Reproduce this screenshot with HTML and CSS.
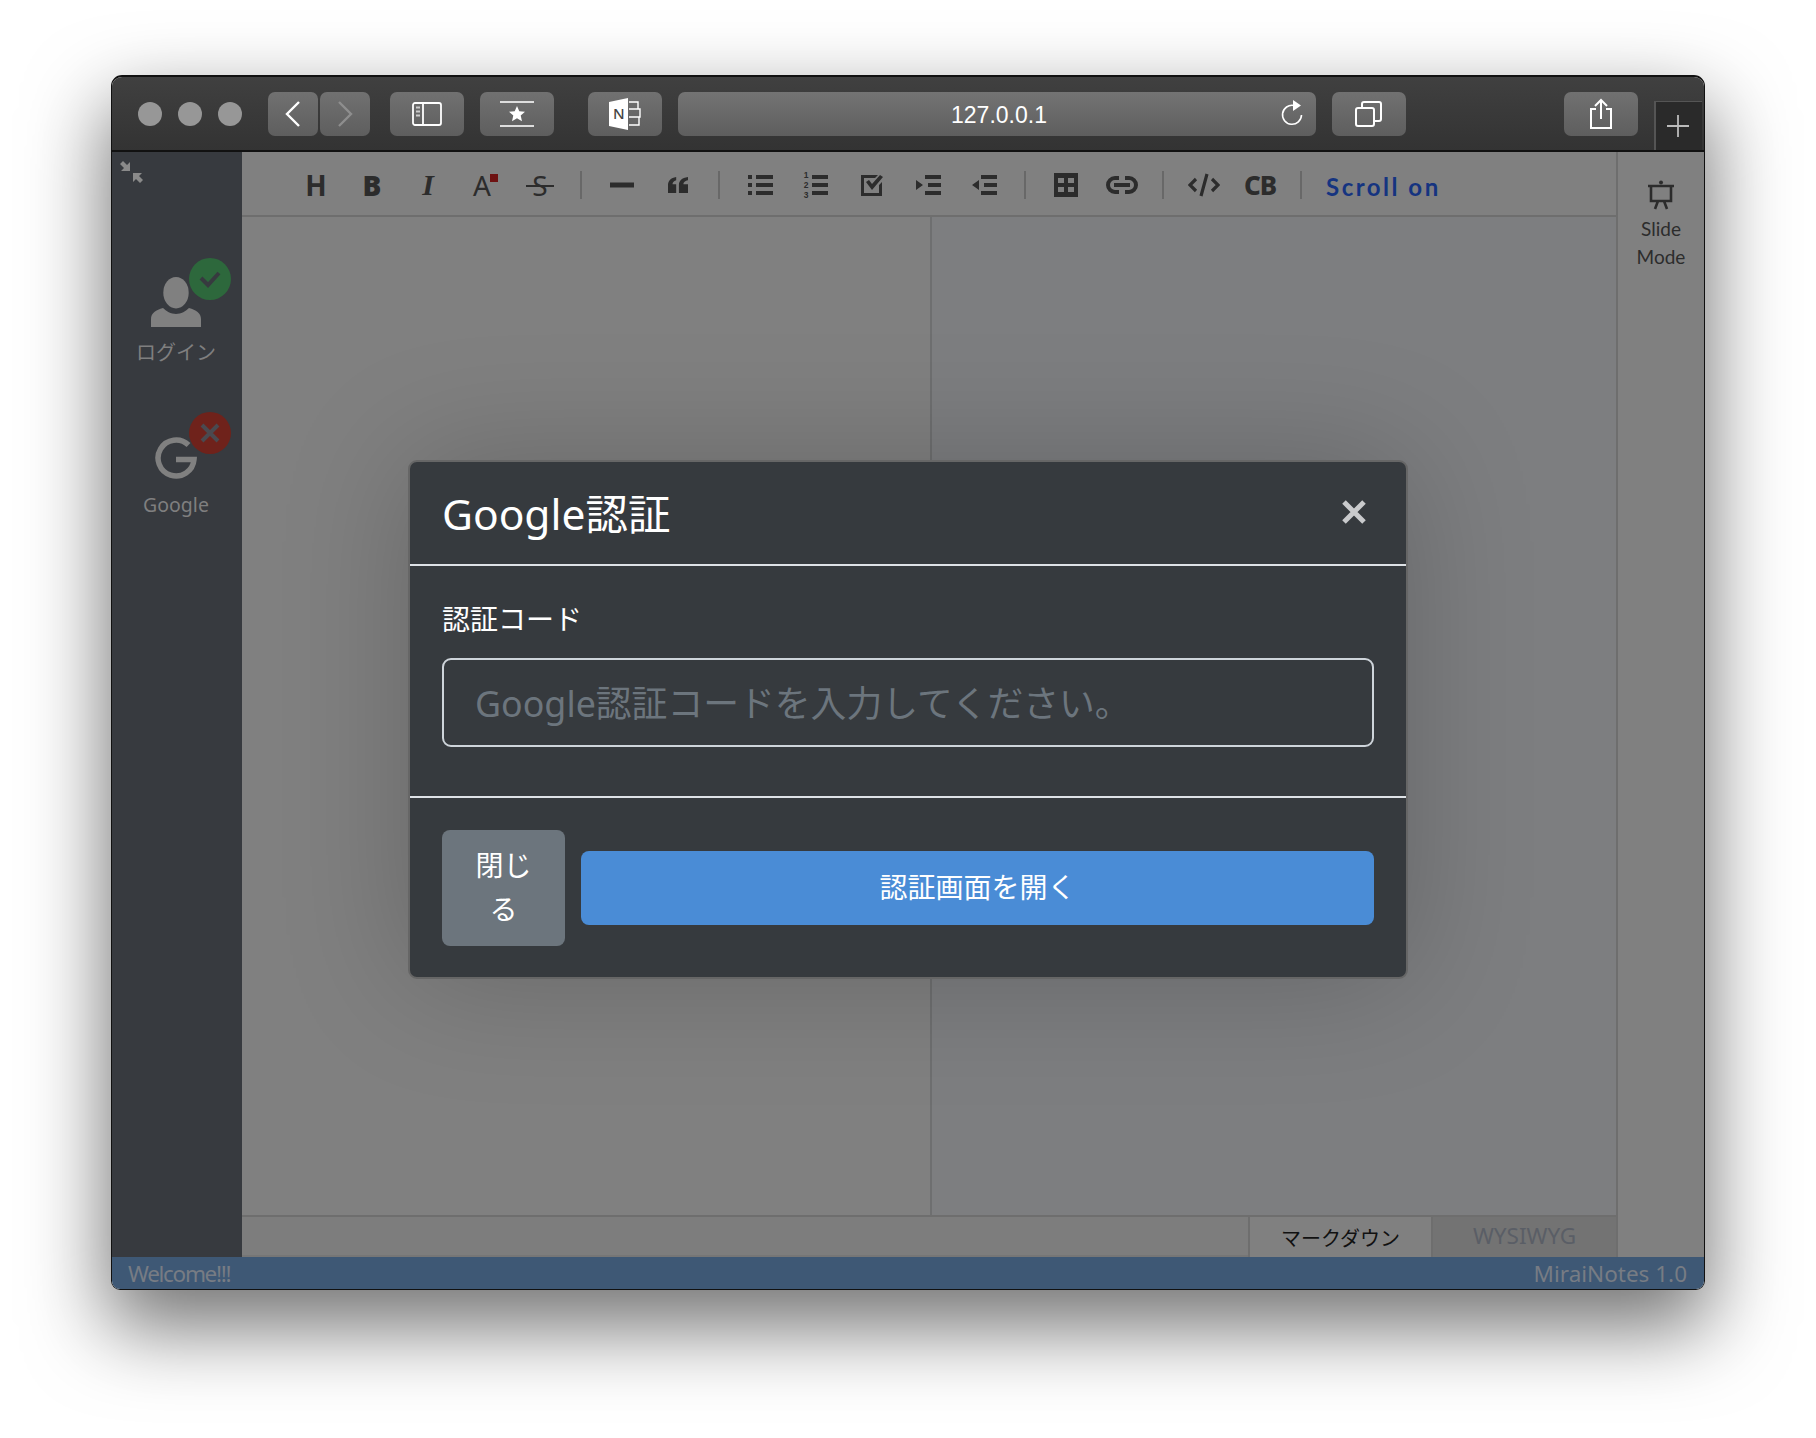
FILE: index.html
```html
<!doctype html>
<html lang="ja">
<head>
  <meta charset="UTF-8">
  <title>MiraiNotes</title>
  <link rel="stylesheet" href="styles.css">
</head>
<body>
<div class="window">
  <div class="window-inner">
    <div class="titlebar">
      <div class="lights"><span></span><span></span><span></span></div>
      <div class="nav-pair">
        <div class="bar-btn nav-btn">
          <svg width="18" height="28" viewBox="0 0 18 28"><path d="M15 2 3 14l12 12" fill="none" stroke="#fff" stroke-width="2.4"/></svg>
        </div>
        <div class="bar-btn nav-btn">
          <svg width="18" height="28" viewBox="0 0 18 28"><path d="M3 2l12 12L3 26" fill="none" stroke="#8e8e8e" stroke-width="2.4"/></svg>
        </div>
      </div>
      <div class="bar-btn wide-btn sidebar-btn">
        <svg width="30" height="24" viewBox="0 0 30 24" fill="none" stroke="#fff" stroke-width="1.8"><rect x="1" y="1" width="28" height="22" rx="2"/><path d="M11 1v22"/><path d="M4 5.5h4M4 9.500h4M4 13.500h4" stroke-width="2" stroke="#ccc"/></svg>
      </div>
      <div class="bar-btn wide-btn star-btn">
        <svg width="34" height="26" viewBox="0 0 34 26"><path d="M0 1h34M0 25h34" stroke="#ddd" stroke-width="2"/><path d="M17 5l2.300 5.300 5.700.5-4.300 3.800 1.300 5.600L17 17.300l-5 2.900 1.300-5.600L9 10.800l5.700-.5z" fill="#fff"/></svg>
      </div>
      <div class="bar-btn wide-btn note-btn">
        <svg width="34" height="34" viewBox="0 0 34 34">
          <path d="M1 5 20 1v32L1 29z" fill="#fff"/>
          <path d="M21 5h9v7h-9M21 12h11v8H21M21 20h10v8h-10" fill="none" stroke="#fff" stroke-width="1.400"/>
          <text x="5" y="22" class="note-n">N</text>
        </svg>
      </div>
      <div class="url-bar">
        <span class="url-text">127.0.0.1</span>
        <svg class="reload" width="24" height="28" viewBox="0 0 24 28" fill="none"><path d="M14 6.500A9.500 9.500 0 1 0 21.500 16" stroke="#fff" stroke-width="1.600"/><path d="M13 1l8 5.500-8 5.500z" fill="#fff"/></svg>
      </div>
      <div class="bar-btn wide-btn tabs-btn">
        <svg width="30" height="28" viewBox="0 0 30 28" fill="none" stroke="#fff" stroke-width="2"><rect x="2" y="8" width="18" height="18" rx="2"/><path d="M8 8V4a2 2 0 0 1 2-2h15a2 2 0 0 1 2 2v15a2 2 0 0 1-2 2h-5"/></svg>
      </div>
      <div class="bar-spacer"></div>
      <div class="bar-btn wide-btn share-btn">
        <svg width="24" height="32" viewBox="0 0 24 32" fill="none" stroke="#fff" stroke-width="2"><path d="M7 11H2v19h20V11h-5"/><path d="M12 21V2M6 8l6-6 6 6"/></svg>
      </div>
      <div class="new-tab">
        <svg width="24" height="24" viewBox="0 0 24 24"><path d="M12 1v22M1 12h22" stroke="#bbb" stroke-width="1.800"/></svg>
      </div>
    </div>

    <div class="app">
      <aside class="sidebar">
        <svg class="collapse" width="24" height="22" viewBox="0 0 24 22" fill="#8a8a8a">
          <path d="M3 0l4 4 3-3v9H1l3-3-4-4zM20 22l-4-4-3 3v-9h9l-3 3 4 4z"/>
        </svg>
        <div class="side-item">
          <div class="side-icon">
            <svg width="50" height="50" viewBox="0 0 50 50" fill="#808080">
              <ellipse cx="25" cy="15.700" rx="12.700" ry="15.700"/>
              <path d="M0 50V42C0 36 5 33 12 31 15 34 20 37 25 37 30 37 35 34 38 31 45 33 50 36 50 42V50Z"/>
            </svg>
            <span class="badge badge-ok">
              <svg width="24" height="20" viewBox="0 0 24 20"><path d="M3 9l7 7L21 4" fill="none" stroke="#373a3f" stroke-width="4"/></svg>
            </span>
          </div>
          <span class="side-label">ログイン</span>
        </div>
        <div class="side-item side-item-google">
          <div class="side-icon">
            <svg width="42" height="42" viewBox="0 0 42 42"><path d="M33.500 8A18 18 0 1 0 39 22.500H21" fill="none" stroke="#808080" stroke-width="5.500"/></svg>
            <span class="badge badge-ng">
              <svg width="22" height="22" viewBox="0 0 22 22"><path d="M3 3l16 16M19 3 3 19" fill="none" stroke="#4a4a50" stroke-width="4"/></svg>
            </span>
          </div>
          <span class="side-label side-label-google">Google</span>
        </div>
      </aside>

      <div class="workspace">
        <div class="toolbar">
          <span class="tool"><b class="glyph glyph-h">H</b></span>
          <span class="tool"><b class="glyph glyph-b">B</b></span>
          <span class="tool"><i class="glyph glyph-i">I</i></span>
          <span class="tool"><span class="glyph glyph-a">A<em class="swatch"></em></span></span>
          <span class="tool"><span class="glyph glyph-s">S</span></span>
          <span class="tool-sep"></span>
          <span class="tool"><svg width="24" height="6" viewBox="0 0 24 6"><rect y=".5" width="24" height="5"/></svg></span>
          <span class="tool">
            <svg width="20" height="16" viewBox="0 0 22 20" preserveAspectRatio="none"><path d="M0 20V10C0 5 3 1 9 0v4C6 5 5 7 5 9h4v11zM12 20V10c0-5 3-9 10-10v4c-4 1-5 3-5 5h5v11z"/></svg>
          </span>
          <span class="tool-sep"></span>
          <span class="tool">
            <svg width="25" height="20" viewBox="0 0 25 20"><path d="M0 0h4v4H0zM0 8h4v4H0zM0 16h4v4H0zM8 0h17v4H8zM8 8h17v4H8zM8 16h17v4H8z"/></svg>
          </span>
          <span class="tool">
            <span class="ol-icon"><span class="ol-nums"><span>1</span><span>2</span><span>3</span></span>
            <svg width="16" height="20" viewBox="0 0 16 20"><path d="M0 0h16v4H0zM0 8h16v4H0zM0 16h16v4H0z"/></svg></span>
          </span>
          <span class="tool">
            <svg width="24" height="24" viewBox="0 0 24 24"><path d="M1 2h17l-3 3H4v15h15v-8l3-3v14H1z"/><path d="M6 9l3-2 3 4 8-9 3 2-11 13z"/></svg>
          </span>
          <span class="tool">
            <svg width="25" height="20" viewBox="0 0 25 20"><path d="M0 5l7 5-7 5zM9 0h16v4H9zM12 8h13v4H12zM9 16h16v4H9z"/></svg>
          </span>
          <span class="tool">
            <svg width="25" height="20" viewBox="0 0 25 20"><path d="M7 5l-7 5 7 5zM9 0h16v4H9zM12 8h13v4H12zM9 16h16v4H9z"/></svg>
          </span>
          <span class="tool-sep"></span>
          <span class="tool">
            <svg width="24" height="24" viewBox="0 0 24 24"><path d="M0 0h24v24H0zM4 5v5h6V5zM14 5v5h6V5zM4 14v5h6v-5zM14 14v5h6v-5z" fill-rule="evenodd"/></svg>
          </span>
          <span class="tool">
            <svg class="line-icon" width="32" height="18" viewBox="0 0 32 18"><path d="M13 2H9a7 7 0 0 0 0 14h4M19 2h4a7 7 0 0 1 0 14h-4M8 9h16"/></svg>
          </span>
          <span class="tool-sep"></span>
          <span class="tool">
            <svg class="line-icon line-icon-thin" width="32" height="24" viewBox="0 0 32 24"><path d="M8 6l-6 6 6 6M24 6l6 6-6 6M19 1l-6 22"/></svg>
          </span>
          <span class="tool"><b class="glyph glyph-cb">CB</b></span>
          <span class="tool-sep"></span>
          <span class="scroll-toggle">Scroll on</span>
        </div>
        <div class="panes">
          <div class="pane pane-edit"></div>
          <div class="pane pane-view"></div>
        </div>
        <div class="mode-tabs">
          <div class="mode-spacer"></div>
          <div class="mode-tab mode-tab-active">マークダウン</div>
          <div class="mode-tab">WYSIWYG</div>
        </div>
      </div>

      <aside class="slide-panel">
        <svg width="28" height="30" viewBox="0 0 28 30" fill="none" stroke="#2c2c2c" stroke-width="2.600">
          <path d="M1 6h26M4 6v15h20V6M11 21l-3 8M17 21l3 8"/>
          <circle cx="14" cy="2.500" r="2" fill="#2c2c2c" stroke="none"/>
        </svg>
        <span class="slide-label">Slide</span>
        <span class="slide-label">Mode</span>
      </aside>
    </div>

    <div class="statusbar">
      <span class="status-left">Welcome!!!</span>
      <span>MiraiNotes 1.0</span>
    </div>
  </div>

  <div class="modal-layer">
    <div class="modal">
      <div class="modal-header">
        <h4 class="modal-title">Google認証</h4>
        <svg class="modal-close" width="26" height="26" viewBox="0 0 26 26"><path d="M3 3l20 20M23 3 3 23" stroke="#c9cacc" stroke-width="5"/></svg>
      </div>
      <div class="modal-body">
        <label class="field-label" for="code">認証コード</label>
        <input class="field-input" id="code" type="text" placeholder="Google認証コードを入力してください。">
      </div>
      <div class="modal-footer">
        <button class="btn btn-close">閉じる</button>
        <button class="btn btn-open">認証画面を開く</button>
      </div>
    </div>
  </div>
</div>
</body>
</html>
```

FILE: styles.css
```css
* {
  margin: 0;
  padding: 0;
  box-sizing: border-box;
}
html, body {
  width: 100%;
  height: 100%;
  background: #fff;
  overflow: hidden;
}
body {
  padding: 75px 111px 0;
  font-family: "Noto Sans", "Noto Sans CJK JP", sans-serif;
}
.window {
  position: relative;
  width: 1594px;
  height: 1215px;
  border-radius: 11px 11px 9px 9px;
  box-shadow: 0 34px 80px 4px rgba(0, 0, 0, .55);
}
.window-inner {
  width: 100%;
  height: 100%;
  display: flex;
  flex-direction: column;
  border: 1px solid #111;
  border-top-width: 2px;
  border-radius: 11px 11px 9px 9px;
  overflow: hidden;
}

/* browser chrome */
.titlebar {
  height: 75px;
  flex: none;
  display: flex;
  align-items: flex-start;
  padding: 15px 2px 0 0;
  background: linear-gradient(#404040, #333);
  border-bottom: 2px solid #111;
}
.lights {
  display: flex;
  gap: 16px;
  margin: 10px 26px 0 26px;
}
.lights span {
  width: 24px;
  height: 24px;
  border-radius: 50%;
  background: #979797;
}
.bar-btn {
  height: 44px;
  display: flex;
  align-items: center;
  justify-content: center;
  border-radius: 7px;
  background: linear-gradient(#717171, #5e5e5e);
}
.nav-pair {
  display: flex;
  gap: 2px;
  margin-right: 20px;
}
.nav-btn {
  width: 50px;
}
.wide-btn {
  width: 74px;
}
.star-btn {
  margin: 0 34px 0 16px;
}
.note-btn {
  margin-right: 16px;
}
.note-n {
  font: 500 15px "Noto Sans", sans-serif;
  fill: #444;
}
.url-bar {
  position: relative;
  width: 638px;
  height: 44px;
  display: flex;
  align-items: center;
  justify-content: center;
  border-radius: 7px;
  background: linear-gradient(#747474, #5e5e5e);
}
.url-text {
  font: 23px/1 "Liberation Sans", sans-serif;
  color: #fff;
  padding: 3px 0 0 4px;
}
.reload {
  position: absolute;
  right: 12px;
  top: 7px;
}
.tabs-btn {
  margin-left: 16px;
}
.bar-spacer {
  flex: 1;
}
.new-tab {
  width: 48px;
  height: 49px;
  margin: 9px 0 0 16px;
  padding-right: 2px;
  display: flex;
  align-items: center;
  justify-content: center;
  background: #2a2a2a;
  border: 1px solid #555;
  border-width: 1px 0 0 2px;
}

/* app */
.app {
  flex: 1;
  display: flex;
  min-height: 0;
}
.sidebar {
  width: 130px;
  flex: none;
  background: #373a3f;
  padding: 9px 2px 0 0;
}
.collapse {
  display: block;
  margin-left: 8px;
}
.side-item {
  display: flex;
  flex-direction: column;
  align-items: center;
  margin-top: 94px;
}
.side-item-google {
  margin-top: 70px;
}
.side-icon {
  position: relative;
  line-height: 0;
  margin-bottom: 12px;
}
.badge {
  position: absolute;
  left: 38px;
  top: -19px;
  width: 42px;
  height: 42px;
  border-radius: 50%;
  display: flex;
  align-items: center;
  justify-content: center;
}
.badge-ok {
  background: #2d683c;
}
.badge-ng {
  left: 34px;
  top: -25px;
  background: #6f221b;
}
.side-label {
  font-size: 20px;
  line-height: 28px;
  color: #7f7f7f;
}
.side-label-google {
  font-size: 19.500px;
}

.workspace {
  flex: 1;
  min-width: 0;
  display: flex;
  flex-direction: column;
  background: #808080;
}
.toolbar {
  height: 65px;
  flex: none;
  display: flex;
  align-items: center;
  padding: 2px 0 0 46px;
  border-bottom: 2px solid #6e6e6e;
}
.tool {
  width: 56px;
  display: flex;
  align-items: center;
  justify-content: center;
}
.tool svg {
  fill: #2c2c2c;
}
.tool svg.line-icon {
  fill: none;
  stroke: #2c2c2c;
  stroke-width: 4;
}
.tool svg.line-icon-thin {
  stroke-width: 3.200;
}
.tool-sep {
  width: 2px;
  height: 28px;
  margin: 0 12px;
  background: #686868;
}
.glyph {
  font-family: "Noto Sans", sans-serif;
  font-size: 28px;
  line-height: 1;
  color: #2c2c2c;
}
.glyph-b {
  font-weight: 900;
}
.glyph-i {
  font-family: "Liberation Serif", serif;
  font-size: 30px;
  font-weight: 700;
}
.glyph-a {
  position: relative;
  margin-left: -4px;
  font-weight: 400;
}
.swatch {
  position: absolute;
  right: -7px;
  top: 3px;
  width: 8px;
  height: 8px;
  background: #6e1212;
}
.glyph-s {
  position: relative;
}
.glyph-s::after {
  content: "";
  position: absolute;
  left: -6px;
  right: -6px;
  top: 14px;
  height: 2px;
  background: #2c2c2c;
}
.glyph-cb {
  font-size: 26px;
  letter-spacing: -1px;
  font-weight: 800;
}
.ol-icon {
  display: flex;
  align-items: center;
  gap: 4px;
}
.ol-nums {
  display: flex;
  flex-direction: column;
  font: 700 8.500px/10px "Liberation Sans", sans-serif;
  color: #2c2c2c;
}
.scroll-toggle {
  margin-left: 12px;
  padding-top: 4px;
  font: 700 24px/1 Lato, sans-serif;
  letter-spacing: 2.500px;
  color: #153480;
}
.panes {
  flex: 1;
  display: flex;
  min-height: 0;
}
.pane-edit {
  flex: none;
  width: 690px;
  background: #808080;
  border-right: 2px solid #6e6f70;
}
.pane-view {
  flex: 1;
  background: #7d7e80;
}
.mode-tabs {
  height: 42px;
  flex: none;
  display: flex;
  gap: 2px;
  background: #6e6e6e;
  padding-top: 2px;
}
.mode-spacer {
  flex: 1;
  background: #7d7d7d;
  border-bottom: 2px solid #767676;
}
.mode-tab {
  width: 181px;
  display: flex;
  align-items: center;
  justify-content: center;
  font-size: 20px;
  color: #111;
  background: #808080;
}
.mode-tab + .mode-tab {
  width: 183px;
  font-size: 22.500px;
  color: #5a5e66;
  background: #737373;
  padding-bottom: 3px;
}
.slide-panel {
  width: 88px;
  flex: none;
  display: flex;
  flex-direction: column;
  align-items: center;
  padding-top: 28px;
  background: #808080;
  border-left: 2px solid #6e6e6e;
}
.slide-panel svg {
  margin-bottom: 5px;
}
.slide-label {
  font: 19px/28px Lato, sans-serif;
  color: #2c2c2c;
}
.statusbar {
  height: 32px;
  flex: none;
  display: flex;
  justify-content: space-between;
  align-items: center;
  padding: 0 17px 0 16px;
  font-size: 22.500px;
  color: #777c84;
  background: #3e5875;
}
.status-left {
  letter-spacing: -1.300px;
}

/* modal */
.modal-layer {
  position: absolute;
  left: 0;
  right: 0;
  top: 385px;
  display: flex;
  justify-content: center;
}
.modal {
  width: 1000px;
  height: 519px;
  background: #363a3e;
  border: 2px solid #666;
  border-radius: 9px;
  box-shadow: 0 0 130px 0 rgba(0, 0, 0, .2);
  color: #fff;
}
.modal-header {
  height: 104px;
  display: flex;
  align-items: center;
  justify-content: space-between;
  padding: 0 39px 2px 32px;
  border-bottom: 2px solid #dee2e6;
}
.modal-title {
  font-size: 42.500px;
  font-weight: 400;
  line-height: 1.5;
  margin-top: 4px;
}
.modal-close {
  margin-top: 0;
}
.modal-body {
  padding: 32px 32px 0;
  height: 232px;
  border-bottom: 2px solid #dee2e6;
}
.field-label {
  display: block;
  font-size: 28px;
  line-height: 42px;
  margin-bottom: 18px;
}
.field-input {
  display: block;
  width: 100%;
  height: 89px;
  padding: 0 31px;
  font-family: inherit;
  font-size: 35.800px;
  color: #fff;
  background: transparent;
  border: 2px solid #ced4da;
  border-radius: 9px;
}
.field-input::placeholder {
  color: #6c757d;
  opacity: 1;
}
.modal-footer {
  display: flex;
  align-items: center;
  gap: 16px;
  padding: 32px 32px 0;
}
.btn {
  font-family: inherit;
  font-size: 28px;
  line-height: 44px;
  color: #fff;
  border: 0;
  border-radius: 8px;
}
.btn-close {
  width: 123px;
  flex: none;
  height: 116px;
  padding: 0 33px 2px;
  background: #6c757d;
}
.btn-open {
  flex: 1;
  height: 74px;
  padding-bottom: 2px;
  background: #4a8cd6;
}
```
